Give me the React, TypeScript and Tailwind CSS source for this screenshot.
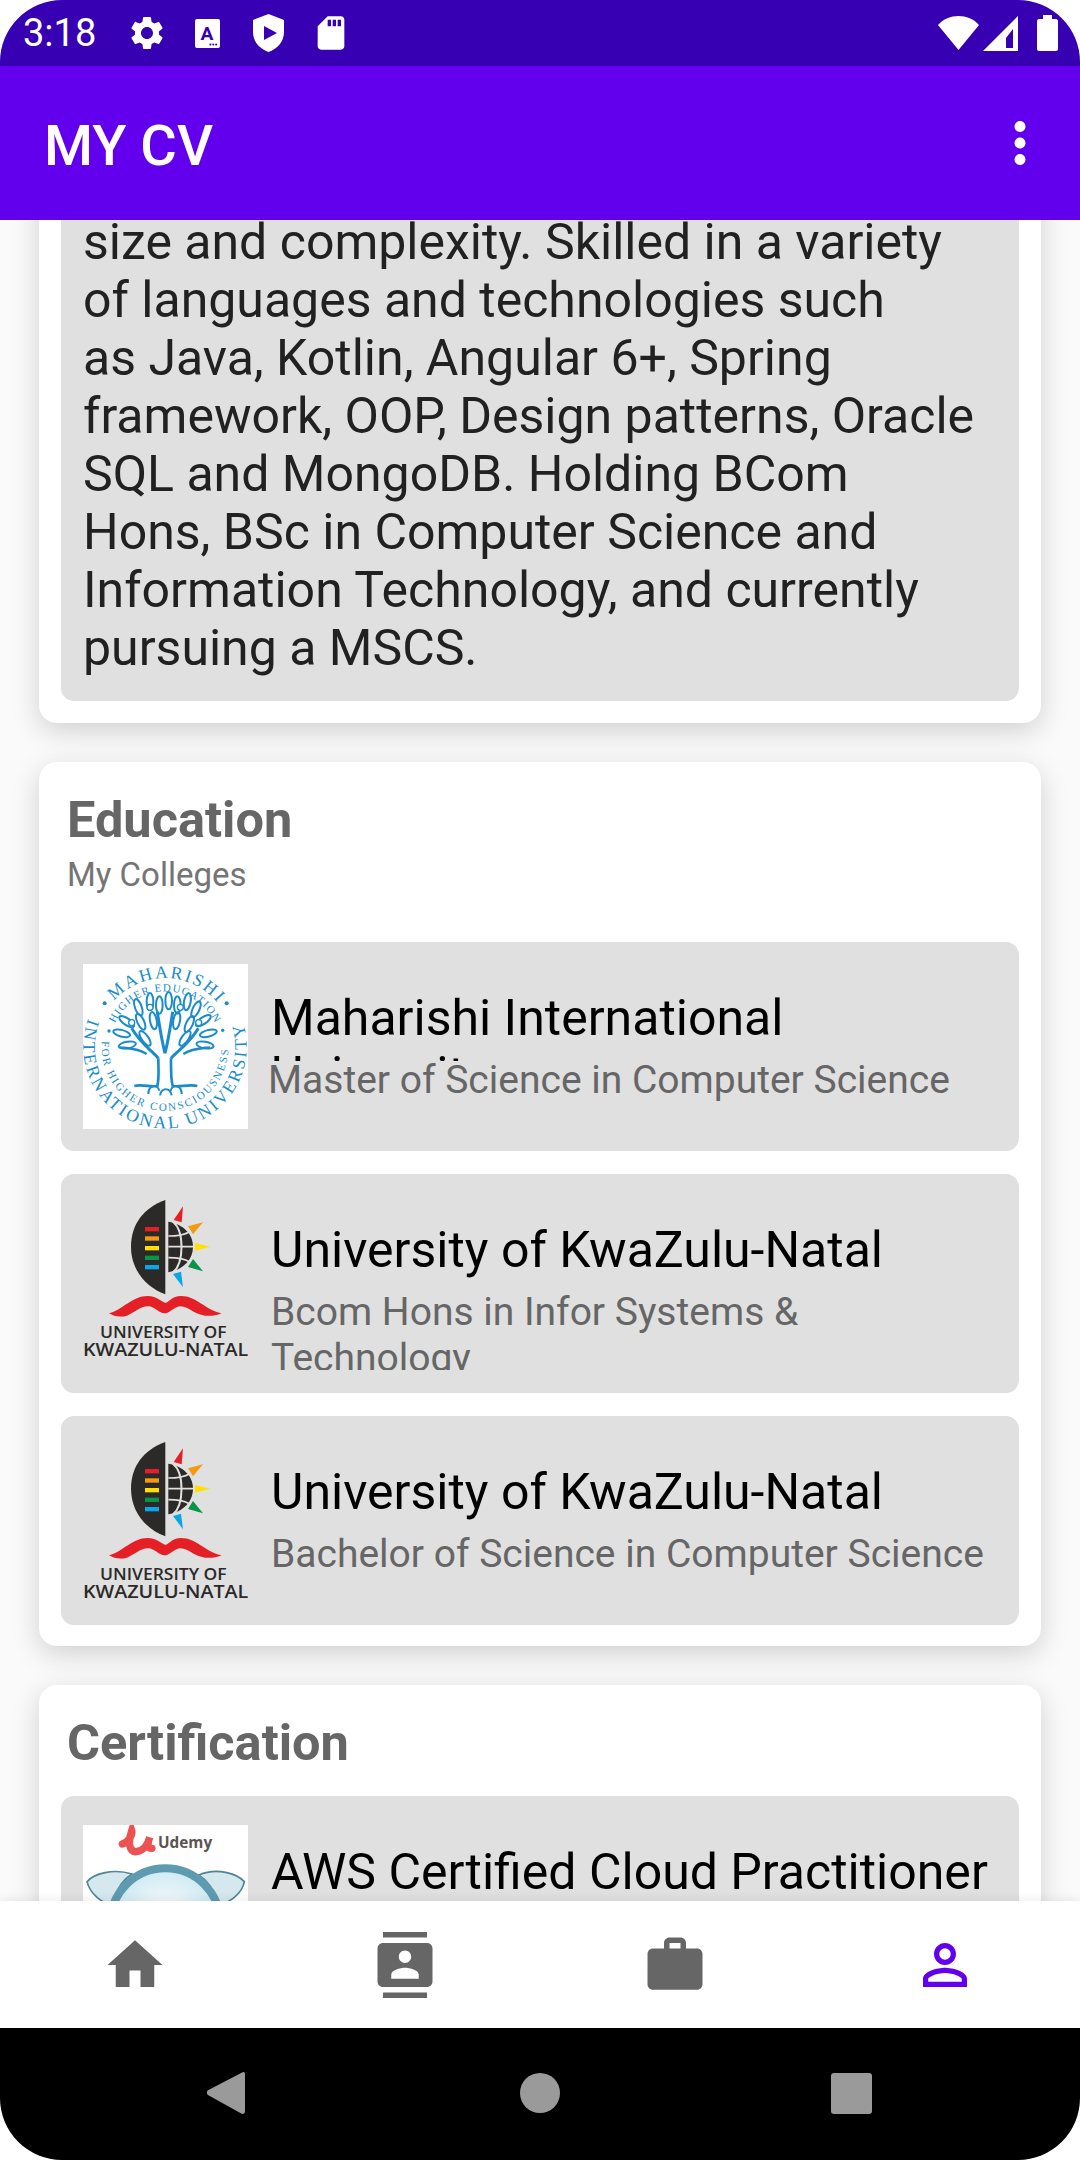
import type { ReactNode } from "react";
import { MdContacts, MdHome, MdMoreVert, MdPersonOutline, MdSettings, MdSdCard, MdWork } from "react-icons/md";

const summaryLines = [
  "size and complexity. Skilled in a variety",
  "of languages and technologies such",
  "as Java, Kotlin, Angular 6+, Spring",
  "framework, OOP, Design patterns, Oracle",
  "SQL and MongoDB. Holding BCom",
  "Hons, BSc in Computer Science and",
  "Information Technology, and currently",
  "pursuing a MSCS.",
];

const leaves = [
  [205, 172, -20], [240, 155, 0], [268, 165, 0], [296, 152, 0], [322, 165, 0], [352, 155, 10], [378, 178, 25],
  [170, 215, -55], [212, 215, -25], [250, 212, -10], [320, 212, 10], [358, 222, 25], [400, 212, 55],
  [155, 250, -75], [172, 285, -100], [225, 265, -35], [345, 265, 35], [415, 250, 75], [405, 285, 100],
];

function MaharishiLogo() {
  return (
    <svg viewBox="39 42 495 495" className="h-full w-full bg-white">
      <defs>
        <path id="mTop" d="M117 172 A205 205 0 0 1 453 172" />
        <path id="mBottom" d="M55 206 A245 245 0 1 0 515 206" />
        <path id="mInnerTop" d="M135 220 A165 165 0 0 1 435 220" />
        <path id="mInnerBottom" d="M96 273 A190 190 0 1 0 474 273" />
      </defs>
      <g fill="#1a8ccc" fontFamily="'Liberation Serif', serif">
        <text fontSize="53" textLength="350">
          <textPath href="#mTop" startOffset="25">MAHARISHI</textPath>
        </text>
        <text fontSize="53" textLength="925">
          <textPath href="#mBottom">INTERNATIONAL UNIVERSITY</textPath>
        </text>
        <text fontSize="33" textLength="375">
          <textPath href="#mInnerTop">HIGHER EDUCATION</textPath>
        </text>
        <text fontSize="33" textLength="610">
          <textPath href="#mInnerBottom">FOR HIGHER CONSCIOUSNESS</textPath>
        </text>
        <circle cx="104" cy="160" r="6" />
        <circle cx="470" cy="160" r="6" />
        <circle cx="117" cy="243" r="5" />
        <circle cx="458" cy="241" r="5" />
      </g>
      <g fill="none" stroke="#1a8ccc" strokeWidth="6">
        <path strokeWidth="8" d="M265 325 C265 360 268 385 262 408 C245 412 215 402 193 408" />
        <path strokeWidth="8" d="M303 325 C303 360 302 385 308 408 C325 412 360 402 382 408" />
        <path strokeWidth="9" d="M265 325 C245 300 215 285 185 235 M303 325 C325 300 355 285 385 235" />
        <path strokeWidth="9" d="M285 310 C275 270 270 240 262 185 M285 310 C295 270 300 240 308 185" />
        <path strokeWidth="7" d="M230 312 C205 295 175 295 150 292 M340 312 C365 295 395 295 420 292" />
        <path d="M235 432 C235 405 262 400 268 422 M270 436 C275 412 300 412 305 436 M335 432 C335 405 308 400 302 422" />
        {leaves.map(([x, y, r], i) => (
          <ellipse key={i} cx={x} cy={y} rx="10" ry="26" transform={`rotate(${r} ${x} ${y})`} />
        ))}
      </g>
      <g fill="white" stroke="#1a8ccc" strokeWidth="4">
        <circle cx="185" cy="218" r="9" />
        <circle cx="240" cy="172" r="9" />
        <circle cx="331" cy="172" r="9" />
        <circle cx="386" cy="218" r="9" />
      </g>
    </svg>
  );
}

function UkznLogo() {
  return (
    <svg viewBox="68 45 495 495" className="h-full w-full">
      <path fill="#2b2a29" d="M315 57 C250 80 212 130 212 197 C212 265 255 318 315 340 Z" />
      <rect x="254" y="138" width="42" height="13" fill="#e41f26" />
      <rect x="254" y="166" width="42" height="13" fill="#f39a12" />
      <rect x="254" y="195" width="42" height="13" fill="#ffe000" />
      <rect x="254" y="224" width="42" height="13" fill="#0a9447" />
      <rect x="254" y="252" width="42" height="13" fill="#0aa6e6" />
      <path fill="#2b2a29" d="M324 122 C370 130 398 160 398 197 C398 235 370 265 324 274 Z" />
      <g fill="none" stroke="#e0e0e0" strokeWidth="5">
        <path d="M324 165 C350 165 375 160 388 152 M324 197 L400 197 M324 230 C350 230 375 235 388 243" />
        <path d="M338 122 C372 150 372 245 338 274" strokeWidth="6" />
      </g>
      <polygon fill="#e41f26" points="368,76 340,117 364,124" />
      <polygon fill="#f39a12" points="428,124 383,136 398,160" />
      <polygon fill="#ffe000" points="450,197 404,186 404,209" />
      <polygon fill="#0a9447" points="428,271 383,258 398,234" />
      <polygon fill="#0aa6e6" points="368,319 338,279 362,272" />
      <path
        fill="#e41f26"
        d="M146 397 C190 385 215 345 262 345 C290 345 305 365 316 365 C325 365 335 345 362 345 C410 345 430 385 484 397 C450 410 425 405 400 392 C380 380 365 372 350 378 C335 385 325 397 312 397 C298 397 285 380 268 376 C245 372 225 392 200 404 C180 410 160 406 146 397 Z"
      />
      <g fill="#2b2a29" fontFamily="'Open Sans', sans-serif" fontWeight="600" textAnchor="middle">
        <text x="309" y="472" fontSize="50" textLength="380" lengthAdjust="spacingAndGlyphs">UNIVERSITY OF</text>
        <text x="316" y="526" fontSize="54" textLength="496" lengthAdjust="spacingAndGlyphs">KWAZULU-NATAL</text>
      </g>
    </svg>
  );
}

function UdemyLogo() {
  return (
    <svg viewBox="68 135 495 495" className="h-full w-full bg-white">
      <defs>
        <radialGradient id="lens" cx="50%" cy="45%" r="60%">
          <stop offset="0%" stopColor="#ffffff" />
          <stop offset="100%" stopColor="#bfe3ee" />
        </radialGradient>
      </defs>
      <path fill="none" stroke="#ec5252" strokeWidth="22" strokeLinecap="round" d="M186 192 C205 185 218 165 214 152 C203 185 205 218 228 215 C250 212 262 195 268 172 C260 195 262 205 275 205" />
      <text x="293" y="205" fontSize="46" fontWeight="700" fill="#5b5450" fontFamily="'Open Sans', sans-serif">Udemy</text>
      <path fill="#d5e8ee" stroke="#4e8597" strokeWidth="5" d="M80 305 C100 280 160 265 215 282 C185 300 165 330 155 380 C125 365 90 345 80 305 Z" />
      <path fill="#d5e8ee" stroke="#4e8597" strokeWidth="5" d="M552 305 C530 280 470 262 415 285 C440 300 462 330 475 380 C505 365 545 345 552 305 Z" />
      <circle cx="315" cy="430" r="165" fill="url(#lens)" stroke="#5f9bb0" strokeWidth="24" />
    </svg>
  );
}

function StatusBar() {
  return (
    <div className="flex h-[66px] shrink-0 items-center bg-[#3700B3] pl-[23px] pr-[22px] text-white">
      <span className="w-[107px] text-[38px] leading-none">3:18</span>
      <MdSettings size={40} className="-ml-[3px]" />
      <svg viewBox="0 0 26 30" className="ml-[28px] h-[29px] w-[25px]">
        <rect width="26" height="30" rx="2" fill="white" />
        <text x="12.5" y="22" textAnchor="middle" fontSize="20" fontWeight="700" fill="#3700B3" fontFamily="Roboto, sans-serif">A</text>
        <circle cx="16" cy="26.5" r="1.1" fill="#3700B3" />
        <circle cx="19" cy="26.5" r="1.1" fill="#3700B3" />
        <circle cx="22" cy="26.5" r="1.1" fill="#3700B3" />
      </svg>
      <svg viewBox="0 0 31 38" className="ml-[33px] h-[38px] w-[31px]">
        <path fill="white" fillRule="evenodd" d="M15.5 0 L31 6 V18 C31 28 24 35 15.5 38 C7 35 0 28 0 18 V6 Z M11 12 V26 L24 19 Z" />
      </svg>
      <MdSdCard size={40} className="ml-[27px]" />
      <div className="flex-1" />
      <svg viewBox="0 0 41 34" className="h-[34px] w-[41px]">
        <path fill="white" d="M20.5 0 C28 0 36 3 41 9 L20.5 34 L0 9 C5 3 13 0 20.5 0 Z" />
      </svg>
      <svg viewBox="0 0 35 35" className="ml-[4px] h-[35px] w-[35px]">
        <path fill="white" fillRule="evenodd" d="M0 35 L35 0 V35 Z M23 22 L30 13 V32 H23 Z" />
      </svg>
      <svg viewBox="0 0 21 36" className="ml-[19px] h-[36px] w-[21px]">
        <path fill="white" d="M6 0 H15 V4 H19 C20 4 21 5 21 6 V34 C21 35 20 36 19 36 H2 C1 36 0 35 0 34 V6 C0 5 1 4 2 4 H6 Z" />
      </svg>
    </div>
  );
}

function AppBar() {
  return (
    <header className="relative z-10 flex h-[154px] shrink-0 items-center justify-between bg-[#6200EE] pl-[44px] text-white">
      <span className="pt-[5px] text-[56px] font-medium leading-none">MY CV</span>
      <MdMoreVert size={66} className="mr-[27px]" />
    </header>
  );
}

function Card({ title, subtitle, children }: { title: string; subtitle?: string; children: ReactNode }) {
  return (
    <section className="mt-[39px] rounded-[18px] bg-white px-[22px] pb-[21px] pt-[31px] shadow-[0_8px_28px_rgba(0,0,0,0.17)]">
      <h2 className="pl-[6px] text-[50.5px] font-bold leading-[54px] text-[#666666]">{title}</h2>
      {subtitle ? <p className="mt-[9px] pl-[6px] text-[33px] leading-[38px] text-[#757575]">{subtitle}</p> : null}
      {children}
    </section>
  );
}

function Row({ logo, title, sub, titleClass, subClass, logoClass, className }: { logo: ReactNode; title: string; sub?: string; titleClass?: string; subClass?: string; logoClass?: string; className?: string }) {
  return (
    <div className={`flex rounded-[13px] bg-[#E0E0E0] pl-[22px] pr-[24px] ${className ?? ""}`}>
      <div className={`h-[165px] w-[165px] shrink-0 ${logoClass ?? "mt-[22px]"}`}>{logo}</div>
      <div className="ml-[23px] min-w-0 flex-1 pt-[48px]">
        <div className={`overflow-hidden text-[50px] leading-[57px] text-black ${titleClass ?? "h-[57px]"}`}>{title}</div>
        {sub ? <div className={`overflow-hidden text-[39px] leading-[46px] text-[#666666] ${subClass ?? "mt-[10px]"}`}>{sub}</div> : null}
      </div>
    </div>
  );
}

export default function App() {
  return (
    <div className="h-[2160px] w-[1080px] bg-white font-['Roboto',sans-serif]">
      <div className="flex h-full flex-col overflow-hidden rounded-[62px] bg-[#FAFAFA]">
        <StatusBar />
        <AppBar />
        <main className="min-h-0 flex-1 overflow-hidden px-[39px]">
          <section className="-mt-[49px] rounded-[18px] bg-white p-[22px] shadow-[0_8px_28px_rgba(0,0,0,0.17)]">
            <div className="rounded-[13px] bg-[#E0E0E0] pb-[24px] pl-[22px] pr-[20px] pt-[20px] text-[50px] leading-[58px] text-[#212121]">
              {summaryLines.map((line) => (
                <div key={line} className="whitespace-nowrap">{line}</div>
              ))}
            </div>
          </section>

          <Card title="Education" subtitle="My Colleges">
            <div className="mt-[48px] flex flex-col gap-[23px]">
              <Row
                logo={<MaharishiLogo />}
                title="Maharishi International University"
                sub="Master of Science in Computer Science"
                titleClass="h-[71px]"
                subClass="-mt-[4px] -ml-[3px]"
                className="h-[209px]"
              />
              <Row logo={<UkznLogo />} title="University of KwaZulu-Natal" sub="Bcom Hons in Infor Systems & Technology" subClass="mt-[10px] h-[81px]" className="h-[219px]" />
              <Row logo={<UkznLogo />} title="University of KwaZulu-Natal" sub="Bachelor of Science in Computer Science" className="h-[209px]" />
            </div>
          </Card>

          <Card title="Certification">
            <div className="mt-[26px]">
              <Row logo={<UdemyLogo />} title="AWS Certified Cloud Practitioner" logoClass="mt-[29px]" className="h-[220px]" />
            </div>
          </Card>
        </main>
        <nav className="relative z-10 grid h-[127px] shrink-0 grid-cols-4 bg-white text-[#666666] shadow-[0_-3px_8px_rgba(0,0,0,0.06)]">
          <div className="flex items-center justify-center"><MdHome size={66} /></div>
          <div className="flex items-center justify-center"><MdContacts size={66} /></div>
          <div className="flex items-center justify-center"><MdWork size={66} /></div>
          <div className="flex items-center justify-center text-[#6200EE]"><MdPersonOutline size={66} /></div>
        </nav>
        <div className="flex h-[132px] shrink-0 items-center bg-black pb-[2px] pl-[207px]">
          <svg viewBox="0 0 40 44" className="h-[44px] w-[38px]">
            <path fill="#9a9a9a" d="M38 0 C40 0 40 1 40 3 V41 C40 43 39 44 37 44 L1 24 C-1 22 -1 21 1 19 Z" />
          </svg>
          <div className="ml-[275px] h-[40px] w-[40px] rounded-full bg-[#9a9a9a]" />
          <div className="ml-[271px] h-[41px] w-[41px] rounded-[3px] bg-[#9a9a9a]" />
        </div>
      </div>
    </div>
  );
}
